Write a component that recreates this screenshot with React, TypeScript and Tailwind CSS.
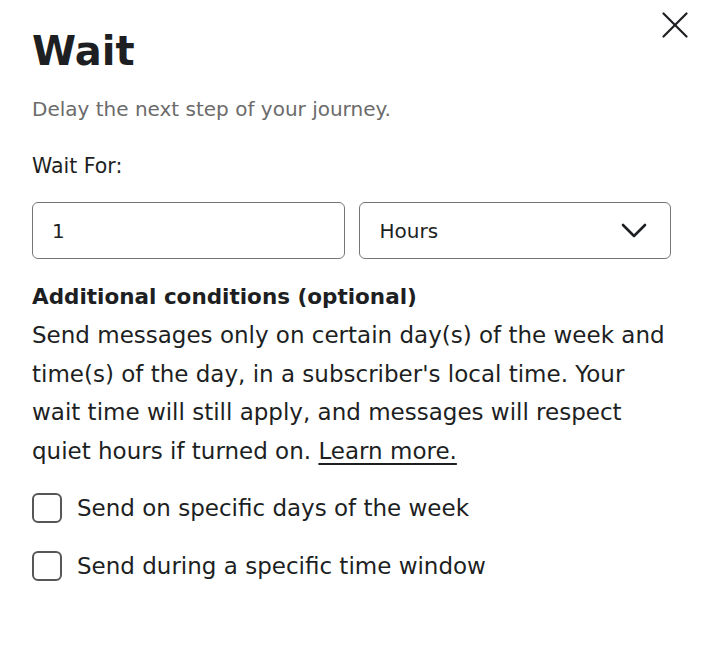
import React from "react";

export default function App() {
  return (
    <div className="relative w-[702px] h-[654px] bg-white text-[#1d1f23] font-['DejaVu_Sans',sans-serif]">
      <button className="absolute left-[662px] top-[12px] w-[26px] h-[26px]" aria-label="Close">
        <svg width="26" height="26" viewBox="0 0 26 26" fill="none" stroke="#1d1f23" strokeWidth="2.2" strokeLinecap="round">
          <line x1="1.5" y1="1.5" x2="24.5" y2="24.5" />
          <line x1="24.5" y1="1.5" x2="1.5" y2="24.5" />
        </svg>
      </button>
      <div className="px-8 pt-[27px]">
        <h1 className="text-[40px] font-bold leading-[48px]">Wait</h1>
        <p className="mt-[20px] text-[20px] leading-[28px] text-[#6b6b6b]">Delay the next step of your journey.</p>
        <p className="mt-[29px] text-[20.5px] leading-[28px]">Wait For:</p>
        <div className="mt-[22px] grid grid-cols-2 gap-[14px] w-[639px]">
          <div className="h-[57px] border border-[#767676] rounded-[6px] flex items-center pl-[19px] text-[20px]">1</div>
          <div className="h-[57px] border border-[#767676] rounded-[6px] flex items-center justify-between pl-[20px] pr-[23px] text-[20px]">
            <span>Hours</span>
            <svg width="26" height="15" viewBox="0 0 26 15" fill="none" stroke="#1d1f23" strokeWidth="2.6" strokeLinecap="round" strokeLinejoin="round">
              <polyline points="2,2 13,13 24,2" />
            </svg>
          </div>
        </div>
        <h2 className="mt-[19px] text-[21.5px] font-bold leading-[38.4px]">Additional conditions (optional)</h2>
        <p className="text-[23px] leading-[38.4px] whitespace-nowrap">
          Send messages only on certain day(s) of the week and
          <br />
          time(s) of the day, in a subscriber's local time. Your
          <br />
          wait time will still apply, and messages will respect
          <br />
          quiet hours if turned on. <a className="underline underline-offset-[4px]" href="#">Learn more.</a>
        </p>
        <div className="mt-[23px] flex flex-col gap-[28px]">
          <label className="flex items-center gap-[15px]">
            <span className="w-[30px] h-[30px] border-[2.5px] border-[#555759] rounded-[6px] shrink-0" />
            <span className="text-[23px] leading-[30px]">Send on specific days of the week</span>
          </label>
          <label className="flex items-center gap-[15px]">
            <span className="w-[30px] h-[30px] border-[2.5px] border-[#555759] rounded-[6px] shrink-0" />
            <span className="text-[23px] leading-[30px]">Send during a specific time window</span>
          </label>
        </div>
      </div>
    </div>
  );
}
